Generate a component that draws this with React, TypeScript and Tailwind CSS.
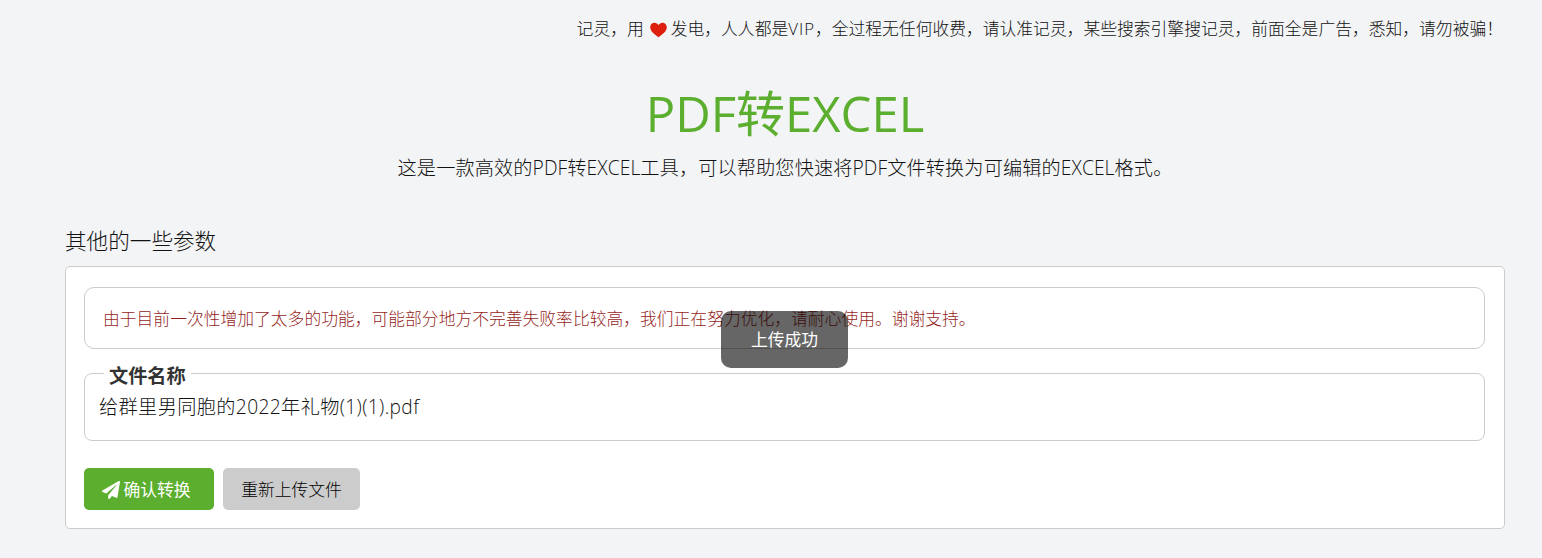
import React from "react";
import { FaPaperPlane } from "react-icons/fa";

const font = "font-['Open_Sans','Noto_Sans_CJK_SC',sans-serif]";

function Heart() {
  return (
    <svg viewBox="0 0 18 16" className="ml-[6px] mr-[4px] inline-block h-[16px] w-[17px] align-[-3px]">
      <path d="M9 15.800C5.500 13 .2 9.800.2 5.200.2 2.400 2.300.3 4.900.3 6.600.3 8.100 1.300 9 2.800c.9-1.500 2.400-2.500 4.100-2.500 2.600 0 4.700 2.100 4.700 4.900 0 4.600-5.300 7.800-8.800 10.600z" fill="#dd1f0d" />
    </svg>
  );
}

export default function App() {
  return (
    <div className={`${font} relative h-[558px] w-full overflow-hidden bg-[#f3f4f6] font-light text-[#111]`}>
      <div className="flex h-[58px] items-center justify-end pr-[39px] text-[16.8px]">
        <span>
          记灵，用<Heart />发电，人人都是<span className="tracking-[1px]">VIP</span>，全过程无任何收费，请认准记灵，某些搜索引擎搜记灵，前面全是广告，悉知，请勿被骗！
        </span>
      </div>

      <div className="mx-[65px] w-[1440px]">
        <h1 className="mt-[19px] text-center text-[49px] font-normal leading-[72px] text-[#5bae2e]">PDF转EXCEL</h1>
        <p className="mt-[5px] text-center text-[19.2px] leading-[28px] tracking-[0.1px]">
          这是一款高效的PDF转EXCEL工具，可以帮助您快速将PDF文件转换为可编辑的EXCEL格式。
        </p>

        <h2 className="mt-[43px] text-[21.6px] leading-[32px]">其他的一些参数</h2>
        <div className="mt-[9px] h-[263px] rounded-[5px] border border-[#ccc] bg-white pl-[18px] pr-[19px] pt-[20px]">
          <div className="flex h-[62px] items-center rounded-[10px] border border-[#ccc] px-[18px] pt-[2px] text-[16.8px] text-[#951f1d]">
            由于目前一次性增加了太多的功能，可能部分地方不完善失败率比较高，我们正在努力优化，请耐心使用。谢谢支持。
          </div>
          <fieldset className="mt-[9px] h-[83px] rounded-[8px] border border-[#ccc] px-[14px]">
            <legend className="ml-[5px] px-[5px] pt-[6px] text-[19.200px] font-bold leading-[24px] text-[#333]">文件名称</legend>
            <div className="pt-[5px] text-[19.200px] leading-[28px] tracking-[0.36px]">给群里男同胞的2022年礼物(1)(1).pdf</div>
          </fieldset>
          <div className="mt-[27px] flex gap-[9px]">
            <button className="flex h-[42px] w-[130px] items-center justify-center gap-[3px] rounded-[5px] bg-[#5bae2e] pr-[5px] pt-px text-[16.8px] font-normal text-white">
              <FaPaperPlane className="size-[18px]" />
              确认转换
            </button>
            <button className="h-[42px] w-[137px] rounded-[5px] bg-[#ccc] pt-px text-[16.8px] text-black">重新上传文件</button>
          </div>
        </div>
      </div>

      <div className="absolute left-[721px] top-[311px] flex h-[57px] w-[127px] items-center justify-center rounded-[10px] bg-black/60 text-[16.8px] font-normal text-white">
        上传成功
      </div>
    </div>
  );
}
